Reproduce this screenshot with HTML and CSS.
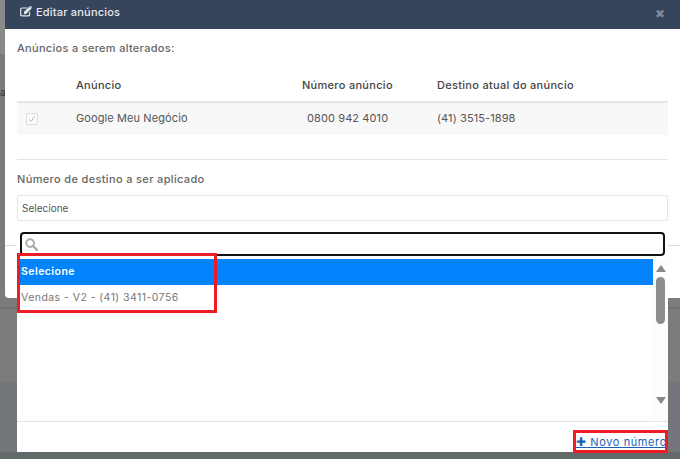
FILE: index.html
```html
<!DOCTYPE html>
<html lang="pt">
<head>
<meta charset="utf-8">
<title>Editar anúncios</title>
<link rel="stylesheet" href="styles.css">
</head>
<body>
<div class="backdrop">
  <div class="band-a"></div>
  <div class="band-line"></div>
  <div class="band-b"></div>
  <span class="peek">as</span>
</div>
<section class="modal">
  <header class="modal-head">
    <h1 class="modal-title">
      <svg class="edit-icon" viewBox="0 0 14 12" width="13" height="11"><path d="M2 1.5h6.5L7.3 2.8H2.2c-.5 0-.9.4-.9.9v5.6c0 .5.4.9.9.9h6.6c.5 0 .9-.4.9-.9V7.2L11 6v3.5c0 1.1-.9 1.9-1.9 1.9H2C.9 11.4 0 10.600 0 9.500v-6C0 2.400.9 1.500 2 1.500z" fill="#e4e7ec"/><path d="M4.300 6.400 10.200.5 12.500 2.800 6.600 8.700 4.100 9z" fill="#e4e7ec"/><path d="M11 .1c.3-.2.600-.2.800 0l1.100 1.100c.2.200.2.500 0 .7l-.3.400-2-2z" fill="#e4e7ec"/></svg>
      Editar anúncios
    </h1>
    <span class="close">✖</span>
  </header>
  <div class="modal-body">
    <h2 class="section-label">Anúncios a serem alterados:</h2>
    <div class="ads">
      <div class="ads-row ads-head">
        <span></span><span>Anúncio</span><span class="num">Número anúncio</span><span>Destino atual do anúncio</span>
      </div>
      <div class="ads-row ads-data">
        <span class="check"><svg viewBox="0 0 10 10" width="8" height="8"><path d="M1.500 5.500 4 8 8.500 1.500" fill="none" stroke="#aaa" stroke-width="1"/></svg></span>
        <span>Google Meu Negócio</span><span class="num">0800 942 4010</span><span>(41) 3515-1898</span>
      </div>
    </div>
    <hr class="rule">
    <h2 class="field-label">Número de destino a ser aplicado</h2>
    <div class="select-box">Selecione</div>
    <hr class="foot-rule">
  </div>
</section>
<div class="dropdown">
  <div class="search">
    <svg viewBox="0 0 14 14" width="13" height="13"><circle cx="5.500" cy="5.500" r="4.200" fill="none" stroke="#a9a9a9" stroke-width="2"/><path d="M8.700 8.700 12.800 12.800" stroke="#a9a9a9" stroke-width="2.400" stroke-linecap="round"/></svg>
  </div>
  <div class="list-wrap">
    <ul class="options">
      <li class="option selected">Selecione</li>
      <li class="option">Vendas - V2 - (41) 3411-0756</li>
    </ul>
    <div class="scrollbar">
      <span class="arrow-up"></span>
      <span class="thumb"></span>
      <span class="arrow-down"></span>
    </div>
  </div>
  <div class="drop-foot">
    <a class="new-number" href="#"><span class="plus">✚</span> Novo número</a>
  </div>
</div>
<div class="mark mark-list"></div>
<div class="mark mark-new"></div>
</body>
</html>
```
FILE: styles.css
```css
* { box-sizing: border-box; }
html, body { margin: 0; height: 100%; }
body {
  width: 680px;
  height: 459px;
  overflow: hidden;
  position: relative;
  background: #6f7173;
  font-family: "Inter", "Liberation Sans", sans-serif;
  color: #555;
}
.backdrop { position: absolute; inset: 0; background: #7c7c7c; }
.band-a { position: absolute; left: 0; right: 0; top: 0; height: 54px; background: #8a8a8a; }
.band-line { position: absolute; left: 0; right: 0; top: 307px; height: 2px; background: #6b7075; }
.band-b { position: absolute; left: 0; right: 0; top: 382px; bottom: 0; background: linear-gradient(#72767a 70px, #63686b 70px); }
.peek { position: absolute; left: 0; top: 86px; font-size: 10px; color: #333; }
.modal {
  position: absolute;
  left: 5px;
  top: -4px;
  width: 690px;
  height: 302px;
  background: #fff;
  border-radius: 4px;
}
.modal-head {
  height: 33px;
  background: #36445c;
  padding: 0 16px 2px 15px;
  display: flex;
  align-items: center;
  border-radius: 4px 4px 0 0;
}
.modal-title {
  margin: 0;
  font-size: 11px;
  font-weight: 500;
  letter-spacing: .2px;
  color: #e6e9ee;
  display: flex;
  align-items: center;
  gap: 3px;
}
.close { position: absolute; left: 650px; top: 10px; font-size: 12px; color: #808998; }
.modal-body { padding: 11px 0 0 12px; width: 663px; }
.section-label { margin: 0; font-size: 11px; line-height: 16px; font-weight: 500; letter-spacing: .3px; color: #666; }
.ads { margin-top: 17px; }
.ads-row {
  display: grid;
  grid-template-columns: 59px 226px 135px 1fr;
  align-items: center;
  font-size: 11px;
}
.ads-head { height: 30px; font-weight: 500; letter-spacing: .3px; color: #444; border-bottom: 2px solid #e6e6ea; padding-bottom: 4px; }
.ads-data { height: 32px; background: #f8f8f9; color: #555; letter-spacing: .1px; padding-bottom: 2px; }
.num { text-align: left; }
.ads-data .num { padding-left: 5px; }
.check {
  width: 12px;
  height: 12px;
  margin-left: 9px;
  margin-top: 2px;
  border: 1px solid #ddd;
  background: #fbfbfb;
  border-radius: 1px;
  display: flex;
  align-items: center;
  justify-content: center;
}
.rule { margin: 24px 0 0; border: 0; border-top: 1px solid #e4e4e4; }
.field-label { margin: 11px 0 0; font-size: 11px; line-height: 16px; font-weight: 500; letter-spacing: .35px; color: #666; }
.select-box {
  margin-top: 8px;
  height: 26px;
  border: 1px solid #e4e4e4;
  border-radius: 2px;
  font-size: 10px;
  line-height: 24px;
  padding-left: 4px;
  color: #555;
}
.foot-rule { position: absolute; left: 0; width: 690px; top: 249px; margin: 0; border: 0; border-top: 1px solid #ddd; }
.dropdown {
  position: absolute;
  left: 17px;
  top: 229px;
  width: 651px;
  height: 223px;
  background: #fff;
  display: flex;
  flex-direction: column;
}
.search {
  margin: 3px 3px 0;
  height: 24px;
  border: 2px solid #111;
  border-radius: 4px;
  display: flex;
  align-items: center;
  padding-left: 3px;
  flex: none;
}
.list-wrap { flex: 1; display: flex; margin-top: 3px; min-height: 0; }
.options { list-style: none; margin: 0; padding: 0 0 0 2px; flex: 1; font-size: 10.500px; letter-spacing: .45px; }
.option { height: 26px; line-height: 25px; padding-left: 2px; color: #777; }
.selected { background: #0384fc; color: #fff; font-weight: 600; }
.scrollbar {
  width: 15px;
  background: #fdfdfd;
  position: relative;
  flex: none;
}
.arrow-up {
  position: absolute; left: 3px; top: 6px;
  border-left: 5px solid transparent; border-right: 5px solid transparent;
  border-bottom: 7px solid #888;
}
.thumb { position: absolute; left: 3px; top: 18px; width: 9px; height: 47px; border-radius: 5px; background: #8c8c8c; }
.arrow-down {
  position: absolute; left: 3px; bottom: 17px;
  border-left: 5px solid transparent; border-right: 5px solid transparent;
  border-top: 7px solid #888;
}
.drop-foot {
  flex: none;
  height: 31px;
  border-top: 1px solid #e4e4e4;
  padding: 12px 0 0 559px;
  font-size: 11px;
  letter-spacing: .6px;
  white-space: nowrap;
}
.new-number { color: #1a5fb4; text-decoration: underline; display: inline-block; }
.plus { font-size: 12px; color: #1a5fb4; }
.mark { position: absolute; border: 3px solid #ee1c25; }
.mark-list { left: 17px; top: 253px; width: 200px; height: 60px; }
.mark-new { left: 573px; top: 430px; width: 95px; height: 23px; }
```
